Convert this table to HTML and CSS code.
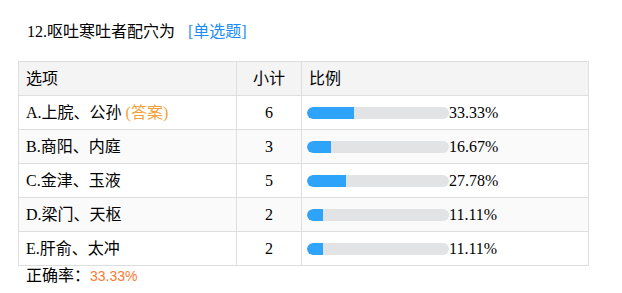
FILE: index.html
```html
<!DOCTYPE html>
<html>
<head>
<meta charset="utf-8">
<link rel="stylesheet" href="styles.css">
</head>
<body>
<div class="wrap">
  <div class="title">12.呕吐寒吐者配穴为<span class="qtype">[单选题]</span></div>
  <table class="stats">
    <colgroup><col class="c1"><col class="c2"><col class="c3"></colgroup>
    <thead>
      <tr><th class="opt">选项</th><th class="cnt">小计</th><th class="pct">比例</th></tr>
    </thead>
    <tbody>
      <tr><td class="opt">A.上脘、公孙 <span class="ans">(答案)</span></td><td class="cnt">6</td><td class="pct"><span class="bar"><span class="fill" style="width:33.33%"></span></span><span class="val">33.33%</span></td></tr>
      <tr><td class="opt">B.商阳、内庭</td><td class="cnt">3</td><td class="pct"><span class="bar"><span class="fill" style="width:16.67%"></span></span><span class="val">16.67%</span></td></tr>
      <tr><td class="opt">C.金津、玉液</td><td class="cnt">5</td><td class="pct"><span class="bar"><span class="fill" style="width:27.78%"></span></span><span class="val">27.78%</span></td></tr>
      <tr><td class="opt">D.梁门、天枢</td><td class="cnt">2</td><td class="pct"><span class="bar"><span class="fill" style="width:11.11%"></span></span><span class="val">11.11%</span></td></tr>
      <tr><td class="opt">E.肝俞、太冲</td><td class="cnt">2</td><td class="pct"><span class="bar"><span class="fill" style="width:11.11%"></span></span><span class="val">11.11%</span></td></tr>
    </tbody>
  </table>
  <div class="rate">正确率：<span class="rate-val">33.33%</span></div>
</div>
</body>
</html>
```
FILE: styles.css
```css
html, body {
  margin: 0;
  padding: 0;
  background: #fff;
}
body {
  font-family: "Liberation Serif", "Noto Sans CJK SC", serif;
  font-size: 16px;
  color: #000;
}
.wrap {
  padding: 20px 0 0 18px;
}
.title {
  padding-left: 9px;
  height: 24px;
  line-height: 24px;
  margin-bottom: 17px;
}
.qtype {
  color: #1a8cf5;
  margin-left: 13px;
}
.stats {
  border-collapse: collapse;
  table-layout: fixed;
  width: 570px;
}
.c1 { width: 218px; }
.c2 { width: 65px; }
.c3 { width: 287px; }
.stats th,
.stats td {
  border: 1px solid #dedede;
  height: 33px;
  padding: 0 7px;
  font-weight: normal;
  text-align: left;
  line-height: 20px;
  white-space: nowrap;
}
.stats th {
  background: #f4f4f4;
}
.stats tbody tr:nth-child(even) td {
  background: #fafafa;
}
.stats .cnt {
  text-align: center;
  padding: 0;
}
.stats td.pct {
  padding-left: 5px;
}
.bar {
  display: inline-block;
  width: 142px;
  height: 12px;
  border-radius: 6px;
  background: #e2e3e5;
  overflow: hidden;
  vertical-align: -1px;
}
.fill {
  display: block;
  height: 100%;
  background: #2da3f9;
  border-radius: 6px 0 0 6px;
}
.ans {
  color: #f2a13a;
}
.rate {
  padding-left: 8px;
  line-height: 20px;
}
.rate-val {
  font-family: "Liberation Sans", sans-serif;
  font-size: 14px;
  color: #ff7830;
}
```
